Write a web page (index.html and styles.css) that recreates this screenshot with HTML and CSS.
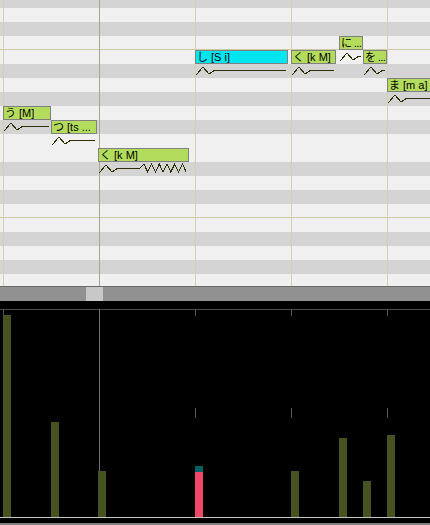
FILE: index.html
```html
<!DOCTYPE html>
<html lang="ja">
<head>
  <meta charset="UTF-8">
  <title>Piano Roll</title>
  <link rel="stylesheet" href="styles.css">
</head>
<body>
  <div class="editor">
    <div class="roll" id="roll">
      <div class="hline" style="top: 49px"></div>
      <div class="hline" style="top: 217px"></div>
      <div class="vline" style="left: 3px"></div>
      <div class="vline measure" style="left: 99px"></div>
      <div class="vline" style="left: 195px"></div>
      <div class="vline" style="left: 291px"></div>
      <div class="vline" style="left: 387px"></div>
    </div>

    <div class="hscroll">
      <div class="thumb"></div>
    </div>

    <div class="velocity" id="velocity">
      <div class="velo-top"></div>
      <div class="velo-line" style="left: 99px"></div>
    </div>
    <div class="footer"></div>
  </div>

  <script>
    const notes = [
      { x: 3,   y: 106, w: 48, text: "う [M]" },
      { x: 51,  y: 120, w: 46, text: "つ [ts ..." },
      { x: 98,  y: 148, w: 91, text: "く [k M]", vib: 42 },
      { x: 195, y: 50,  w: 93, text: "し [S i]", selected: true },
      { x: 291, y: 50,  w: 45, text: "く [k M]" },
      { x: 339, y: 36,  w: 24, text: "に ...", short: true },
      { x: 363, y: 50,  w: 24, text: "を ...", short: true },
      { x: 387, y: 78,  w: 50, text: "ま [m a]" }
    ];

    const bars = [
      { x: 3,   h: 202 },
      { x: 51,  h: 95 },
      { x: 98,  h: 46 },
      { x: 195, h: 45, selected: true },
      { x: 291, h: 46 },
      { x: 339, h: 79 },
      { x: 363, h: 36 },
      { x: 387, h: 82 }
    ];

    const ticks = [3, 195, 291, 387];

    function curvePath(note) {
      const end = note.w - 2;
      let d = "M1,11 L8,3 L14,10 L20,6 ";
      if (!note.vib) return d + "H" + end;
      d += "H" + note.vib;
      let x = note.vib;
      while (x + 7.7 <= end + 1) {
        d += " L" + (x + 3.85).toFixed(1) + ",2 L" + (x + 7.7).toFixed(1) + ",10";
        x += 7.7;
      }
      return d;
    }

    const roll = document.getElementById("roll");
    notes.forEach(note => {
      const el = document.createElement("div");
      el.className = "note" + (note.selected ? " selected" : "") + (note.short ? " short" : "");
      el.style.left = note.x + "px";
      el.style.top = note.y + "px";
      el.style.width = note.w + "px";
      el.textContent = note.text;
      roll.appendChild(el);

      const svg = document.createElementNS("http://www.w3.org/2000/svg", "svg");
      svg.setAttribute("class", "curve");
      svg.setAttribute("width", note.w);
      svg.setAttribute("height", 14);
      svg.style.left = note.x + "px";
      svg.style.top = (note.y + 14) + "px";
      const path = document.createElementNS("http://www.w3.org/2000/svg", "path");
      path.setAttribute("d", curvePath(note));
      svg.appendChild(path);
      roll.appendChild(svg);
    });

    const velocity = document.getElementById("velocity");
    ticks.forEach(x => {
      ["tick top", "tick mid"].forEach(cls => {
        const t = document.createElement("div");
        t.className = cls;
        t.style.left = x + "px";
        velocity.appendChild(t);
      });
    });
    bars.forEach(bar => {
      const el = document.createElement("div");
      el.className = bar.selected ? "bar selected" : "bar";
      el.style.left = bar.x + "px";
      el.style.height = bar.h + "px";
      velocity.appendChild(el);
    });
  </script>
</body>
</html>
```

FILE: styles.css
```css
body {
  margin: 0;
  background-color: #000;
  overflow: hidden;
}

.editor {
  width: 430px;
  height: 525px;
  display: flex;
  flex-direction: column;
}

/* piano roll: 14px per key, dark rows are the black keys */
.roll {
  position: relative;
  height: 286px;
  overflow: hidden;
  background-color: #f0f0f0;
  background-image: linear-gradient(to bottom,
    #d4d4d4 0, #d4d4d4 14px,
    #f0f0f0 14px, #f0f0f0 28px,
    #d4d4d4 28px, #d4d4d4 42px,
    #f0f0f0 42px, #f0f0f0 70px,
    #d4d4d4 70px, #d4d4d4 84px,
    #f0f0f0 84px, #f0f0f0 98px,
    #d4d4d4 98px, #d4d4d4 112px,
    #f0f0f0 112px, #f0f0f0 126px,
    #d4d4d4 126px, #d4d4d4 140px,
    #f0f0f0 140px, #f0f0f0 168px);
  background-size: 100% 168px;
  background-position: 0 -6px;
}

.hline {
  position: absolute;
  left: 0;
  right: 0;
  height: 1px;
  background-color: #cdc8a4;
}

.vline {
  position: absolute;
  top: 0;
  bottom: 0;
  width: 1px;
  background-color: #d4d0ae;
}

.vline.measure {
  background-color: #a9a68e;
}

.note {
  position: absolute;
  height: 14px;
  box-sizing: border-box;
  padding: 0 0 0 1px;
  border: 1px solid #808080;
  background-color: #b4dc5c;
  color: #000;
  font-family: "Liberation Sans", "Noto Sans CJK JP", sans-serif;
  font-size: 11px;
  line-height: 12px;
  white-space: pre;
  overflow: hidden;
}

.note.short {
  letter-spacing: -0.6px;
}

.note.selected {
  background-color: #00e6f0;
}

.curve {
  position: absolute;
  overflow: visible;
}

.curve path {
  fill: none;
  stroke: #2e2e00;
  stroke-width: 1;
  shape-rendering: crispEdges;
}

/* horizontal scrollbar */
.hscroll {
  height: 15px;
  box-sizing: border-box;
  border-top: 1px solid #6a6a6a;
  background-color: #919191;
}

.thumb {
  margin-left: 86px;
  width: 17px;
  height: 14px;
  background-color: #c8c8c8;
}

/* velocity pane */
.velocity {
  position: relative;
  height: 216px;
  border-bottom: 1px solid #c4c4c4;
  background-color: #000;
}

.velo-top {
  position: absolute;
  top: 8px;
  left: 0;
  right: 0;
  height: 1px;
  background-color: #4c4c4c;
}

.velo-line {
  position: absolute;
  top: 8px;
  bottom: 0;
  width: 1px;
  background-color: #6e6e6e;
}

.tick {
  position: absolute;
  width: 1px;
  background-color: #555;
}

.tick.top {
  top: 8px;
  height: 7px;
}

.tick.mid {
  top: 107px;
  height: 10px;
}

.bar {
  position: absolute;
  bottom: 0;
  width: 8px;
  background-color: #465220;
}

.bar.selected {
  background-color: #f0486a;
  border-top: 6px solid #006064;
}

.footer {
  height: 7px;
  box-sizing: border-box;
  border-bottom: 2px solid #808080;
  background-color: #000;
}
```
